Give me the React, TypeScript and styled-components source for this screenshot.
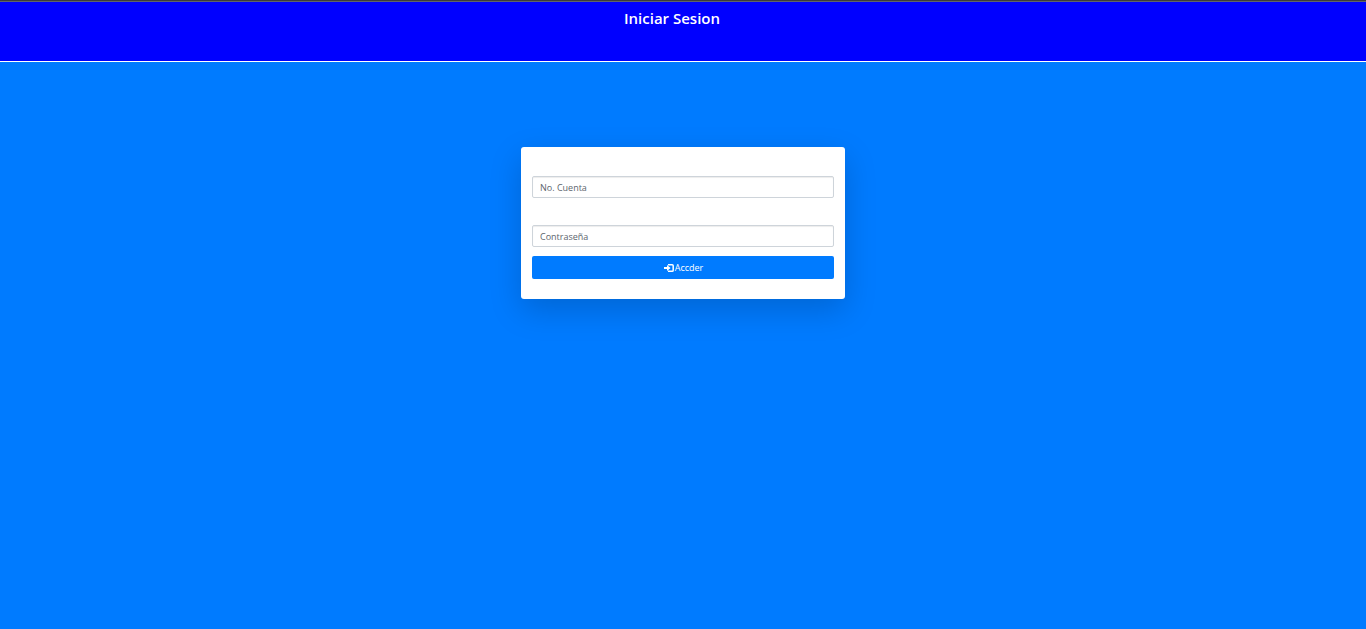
import React from "react";
import styled, { createGlobalStyle } from "styled-components";

const GlobalStyle = createGlobalStyle`
  *, *::before, *::after { box-sizing: border-box; }
  body {
    margin: 0;
    background: #007bff;
    font-family: "Open Sans", "Noto Sans", sans-serif;
  }
`;

const Header = styled.header`
  height: 62px;
  padding: 6px 22px 0 0;
  background: #0000ff;
  border-bottom: 1px solid #ffffff;
  box-shadow: inset 0 1px #3b3b3b, inset 0 2px #5f6368;
`;

const Title = styled.h1`
  margin: 0;
  color: #ffffff;
  font-size: 15px;
  font-weight: 600;
  line-height: 24px;
  text-align: center;
`;

const Main = styled.main`
  display: flex;
  justify-content: center;
  padding: 85px 11px 48px;
`;

const Card = styled.form`
  display: flex;
  flex-direction: column;
  width: 100%;
  max-width: 324px;
  padding: 29px 11px 20px;
  background: #ffffff;
  border-radius: 3px;
  box-shadow: 0 11px 32px rgba(0, 0, 0, 0.175);
`;

const Field = styled.input<{ $gap: number }>`
  width: 100%;
  height: 22px;
  margin: 0 0 ${({ $gap }) => $gap}px;
  padding: 0 7px;
  border: 1px solid #ced4da;
  border-radius: 2px;
  background: #ffffff;
  box-shadow: inset 0 1px 1px rgba(0, 0, 0, 0.075);
  color: #495057;
  font-family: inherit;
  font-size: 9px;

  &::placeholder {
    color: #5c656d;
    opacity: 1;
  }
`;

const SubmitButton = styled.button`
  display: flex;
  align-items: center;
  justify-content: center;
  gap: 1px;
  height: 23px;
  padding: 0 0 0 1px;
  border: 0;
  border-radius: 2px;
  background: #007bff;
  color: #ffffff;
  font-family: inherit;
  font-size: 9px;
  cursor: pointer;
`;

function LoginIcon() {
  return (
    <svg width="10" height="10" viewBox="0 0 10 10" aria-hidden="true">
      <path d="M0 4h3V2l3.6 3L3 8V6H0z" fill="#fff" />
      <path
        d="M4 1.7H8.1A1.1 1.1 0 0 1 9.2 2.8V7.2A1.1 1.1 0 0 1 8.1 8.3H4"
        fill="none"
        stroke="#fff"
        strokeWidth="1.5"
      />
    </svg>
  );
}

export default function App() {
  return (
    <>
      <GlobalStyle />
      <Header>
        <Title>Iniciar Sesion</Title>
      </Header>
      <Main>
        <Card onSubmit={(event) => event.preventDefault()}>
          <Field $gap={27} type="text" placeholder="No. Cuenta" aria-label="No. Cuenta" />
          <Field $gap={9} type="password" placeholder="Contraseña" aria-label="Contraseña" />
          <SubmitButton type="submit">
            <LoginIcon />
            Accder
          </SubmitButton>
        </Card>
      </Main>
    </>
  );
}
